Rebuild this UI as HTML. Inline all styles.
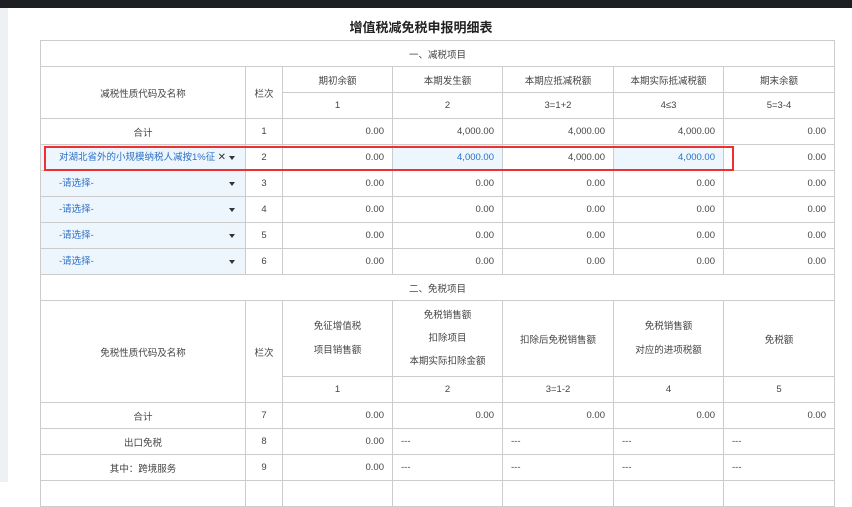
<!DOCTYPE html>
<html><head><meta charset="utf-8"><style>
body{margin:0;width:852px;height:482px;overflow:hidden;background:#fff;font-family:"Liberation Sans","Noto Sans CJK SC",sans-serif;font-size:9.5px;color:#444;position:relative}
.top{position:absolute;left:0;top:0;width:852px;height:8px;background:#1e1f22}
.lside{position:absolute;left:0;top:8px;width:8px;height:474px;background:#eef0f3}
h1{position:absolute;left:0;width:842px;top:17px;margin:0;text-align:center;font-size:13px;font-weight:bold;color:#222}
table{position:absolute;left:40px;top:40px;border-collapse:collapse;table-layout:fixed}
td{border:1px solid #ccc;text-align:center;padding:0;height:25px;white-space:nowrap;overflow:hidden}
.r{text-align:right;padding-right:8px}
.l{text-align:left;padding-left:8px}
.sel{background:#eef6fd;color:#2b6fc8;text-align:left;padding:0}
.sel div{position:relative;height:25px;line-height:25px;padding-left:18px}
.sel .t{display:inline-block;max-width:156px;overflow:hidden;vertical-align:top}
.sel .a{position:absolute;right:10px;top:11px;width:0;height:0;border-left:3px solid transparent;border-right:3px solid transparent;border-top:4px solid #333}
.sel .x{position:absolute;right:19px;top:0;color:#333;font-size:10px}
.b{color:#2b6fc8}
.bb{background:#eef6fd}
.red{position:absolute;left:44px;top:146px;width:686px;height:21px;border:2px solid #f03030}
</style></head><body>
<div class="top"></div><div class="lside"></div>
<h1>增值税减免税申报明细表</h1>
<table>
<colgroup><col style="width:205px"><col style="width:37px"><col style="width:110px"><col style="width:110px"><col style="width:111px"><col style="width:110px"><col style="width:111px"></colgroup>
<tr><td colspan="7">一、减税项目</td></tr>
<tr><td rowspan="2">减税性质代码及名称</td><td rowspan="2">栏次</td><td>期初余额</td><td>本期发生额</td><td>本期应抵减税额</td><td>本期实际抵减税额</td><td>期末余额</td></tr>
<tr><td>1</td><td>2</td><td>3=1+2</td><td>4≤3</td><td>5=3-4</td></tr>
<tr><td>合计</td><td>1</td><td class="r">0.00</td><td class="r">4,000.00</td><td class="r">4,000.00</td><td class="r">4,000.00</td><td class="r">0.00</td></tr>
<tr><td class="sel"><div><span class="t">对湖北省外的小规模纳税人减按1%征收率</span><span class="x">✕</span><span class="a"></span></div></td><td>2</td><td class="r">0.00</td><td class="r b bb">4,000.00</td><td class="r">4,000.00</td><td class="r b bb">4,000.00</td><td class="r">0.00</td></tr>
<tr><td class="sel"><div>-请选择-<span class="a"></span></div></td><td>3</td><td class="r">0.00</td><td class="r">0.00</td><td class="r">0.00</td><td class="r">0.00</td><td class="r">0.00</td></tr>
<tr><td class="sel"><div>-请选择-<span class="a"></span></div></td><td>4</td><td class="r">0.00</td><td class="r">0.00</td><td class="r">0.00</td><td class="r">0.00</td><td class="r">0.00</td></tr>
<tr><td class="sel"><div>-请选择-<span class="a"></span></div></td><td>5</td><td class="r">0.00</td><td class="r">0.00</td><td class="r">0.00</td><td class="r">0.00</td><td class="r">0.00</td></tr>
<tr><td class="sel"><div>-请选择-<span class="a"></span></div></td><td>6</td><td class="r">0.00</td><td class="r">0.00</td><td class="r">0.00</td><td class="r">0.00</td><td class="r">0.00</td></tr>
<tr><td colspan="7">二、免税项目</td></tr>
<tr><td rowspan="2">免税性质代码及名称</td><td rowspan="2">栏次</td><td style="height:75px;line-height:24px">免征增值税<br>项目销售额</td><td style="line-height:23px">免税销售额<br>扣除项目<br>本期实际扣除金额</td><td>扣除后免税销售额</td><td style="line-height:24px">免税销售额<br>对应的进项税额</td><td>免税额</td></tr>
<tr><td>1</td><td>2</td><td>3=1-2</td><td>4</td><td>5</td></tr>
<tr><td>合计</td><td>7</td><td class="r">0.00</td><td class="r">0.00</td><td class="r">0.00</td><td class="r">0.00</td><td class="r">0.00</td></tr>
<tr><td>出口免税</td><td>8</td><td class="r">0.00</td><td class="l">---</td><td class="l">---</td><td class="l">---</td><td class="l">---</td></tr>
<tr><td>其中：跨境服务</td><td>9</td><td class="r">0.00</td><td class="l">---</td><td class="l">---</td><td class="l">---</td><td class="l">---</td></tr>
<tr><td></td><td></td><td></td><td></td><td></td><td></td><td></td></tr>
</table>
<div class="red"></div>
</body></html>
